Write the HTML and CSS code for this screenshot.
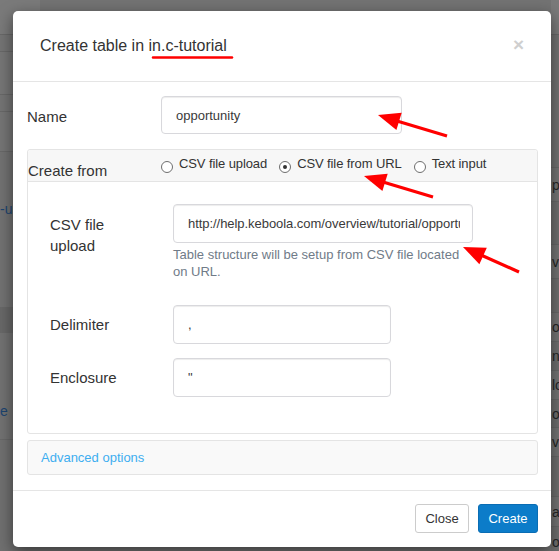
FILE: index.html
```html
<!DOCTYPE html>
<html>
<head>
<meta charset="utf-8">
<title>Create table</title>
<link rel="stylesheet" href="styles.css">
</head>
<body>
<div class="page">
  <div class="bg-left">
    <div class="bl bl-top"></div>
    <div class="bl bl-h17"></div>
    <div class="bl bl-h43"></div>
    <div class="bl bl-h17"></div>
    <div class="bl bl-h40"></div>
    <div class="bl bl-d"><span class="bg-link">-users</span></div>
    <div class="bl bl-band"></div>
    <div class="bl bl-e"><span class="bg-link">e</span></div>
    <div class="bl bl-rest"></div>
  </div>
  <div class="bg-mid"></div>
  <div class="bg-right">
    <div class="br br-top"></div>
    <div class="br br-h133"></div>
    <div class="br br-h34 alt">pt</div>
    <div class="br br-h43"></div>
    <div class="br br-h34 alt">va</div>
    <div class="br br-h34"></div>
    <div class="br br-h29 alt">oš</div>
    <div class="br br-h29">n</div>
    <div class="br br-h29 alt">lo</div>
    <div class="br br-h28">ov</div>
    <div class="br br-h29 alt">vá</div>
    <div class="br br-h40"></div>
    <div class="br br-h30 alt">ač</div>
    <div class="br br-h30">ou</div>
  </div>
</div>

<div class="modal">
  <div class="modal-header">
    <h4 class="title">Create table in <span class="bucket">in.c-tutorial</span></h4>
    <span class="close">×</span>
  </div>
  <div class="modal-body">
    <div class="name-row">
      <label class="name-label">Name</label>
      <input class="field name-input" type="text" value="opportunity">
    </div>

    <div class="panel">
      <div class="panel-heading">
        <span class="from-label">Create from</span>
        <div class="radios">
          <label class="radio"><span class="circle"></span><span>CSV file upload</span></label>
          <label class="radio"><span class="circle checked"></span><span>CSV file from URL</span></label>
          <label class="radio"><span class="circle"></span><span>Text input</span></label>
        </div>
      </div>
      <div class="panel-body">
        <div class="group group-url">
          <label class="group-label label-top">CSV file upload</label>
          <div class="group-field">
            <input class="field url-input" type="text" value="http://help.keboola.com/overview/tutorial/opportunity.csv">
            <p class="help">Table structure will be setup from CSV file located on URL.</p>
          </div>
        </div>
        <div class="group group-mid">
          <label class="group-label">Delimiter</label>
          <input class="field small-input" type="text" value=",">
        </div>
        <div class="group group-mid group-last">
          <label class="group-label">Enclosure</label>
          <input class="field small-input" type="text" value="&quot;">
        </div>
      </div>
    </div>

    <div class="advanced">
      <span class="adv-link">Advanced options</span>
    </div>
  </div>
  <div class="modal-footer">
    <button class="btn btn-default">Close</button>
    <button class="btn btn-primary">Create</button>
  </div>
</div>

<svg class="annot" width="559" height="551" viewBox="0 0 559 551">
  <line x1="153" y1="57.5" x2="232" y2="57.5" stroke="#ff0000" stroke-width="2.5" stroke-linecap="round"/>
  <line x1="447" y1="136" x2="397" y2="121" stroke="#ff0000" stroke-width="3.2"/>
  <polygon points="378,115 401.7,112.8 396.4,130" fill="#ff0000"/>
  <line x1="433" y1="197" x2="383" y2="182" stroke="#ff0000" stroke-width="3.2"/>
  <polygon points="364,176 387.7,173.8 382.4,191" fill="#ff0000"/>
  <line x1="519" y1="272" x2="481" y2="255" stroke="#ff0000" stroke-width="3.2"/>
  <polygon points="463,247 486.8,247.8 479.4,264.2" fill="#ff0000"/>
</svg>
</body>
</html>
```

FILE: styles.css
```css
html, body {
  margin: 0;
  padding: 0;
}

body {
  width: 559px;
  height: 551px;
  overflow: hidden;
  position: relative;
  font-family: "Liberation Sans", Arial, sans-serif;
}

/* ---------- dimmed page behind the dialog ---------- */
.page {
  display: grid;
  grid-template-columns: 40px 1fr 8px;
  height: 551px;
  background: #737373;
  font-size: 14px;
  overflow: hidden;
}

.bg-left, .bg-right {
  display: flex;
  flex-direction: column;
  overflow: hidden;
  white-space: nowrap;
}

.bl {
  box-sizing: border-box;
  border-bottom: 1px solid #686868;
  flex-shrink: 0;
}
.bl-top { height: 35px; background: #7a7a7a; }
.bl-h17 { height: 17px; background: #747474; }
.bl-h43 { height: 43px; background: #767676; }
.bl-h40 { height: 40px; background: #757575; }
.bl-d { height: 156px; padding-top: 48px; line-height: 18px; background: #727272; }
.bl-band { height: 25px; background: #686868; }
.bl-e { height: 107px; padding-top: 69px; line-height: 18px; background: #727272; }
.bl-rest { flex: 1; border-bottom: none; background: #707070; }

.bg-link {
  color: #1c4470;
}

.br {
  box-sizing: border-box;
  border-bottom: 1px solid #686868;
  flex-shrink: 0;
  color: #262626;
  padding-left: 1px;
  background: #6f6f6f;
}
.br.alt { background: #747474; }
.br-top { height: 35px; background: #7a7a7a; }
.br-h133 { height: 133px; background: #727272; }
.br-h34 { height: 34px; line-height: 34px; }
.br-h43 { height: 43px; }
.br-h29 { height: 29px; line-height: 29px; }
.br-h28 { height: 28px; line-height: 28px; }
.br-h40 { height: 40px; }
.br-h30 { height: 30px; line-height: 30px; }

/* ---------- dialog ---------- */
.modal {
  position: absolute;
  left: 13px;
  top: 11px;
  width: 538px;
  background: #fff;
  border-radius: 5px;
  box-shadow: 0 5px 15px rgba(0, 0, 0, 0.5);
  color: #333;
}

.modal-header {
  display: flex;
  justify-content: space-between;
  align-items: flex-start;
  padding: 24px 27px 24px 27px;
  border-bottom: 1px solid #e5e5e5;
}

.title {
  margin: 0;
  font-size: 16px;
  line-height: 22px;
  font-weight: normal;
  color: #333;
}

.close {
  font-size: 19px;
  line-height: 20px;
  font-weight: bold;
  color: #cfcfcf;
  margin-top: 0;
}

.modal-body {
  padding: 14px 13px 15px 14px;
}

.name-row {
  display: flex;
  align-items: center;
}

.name-label {
  width: 134px;
  font-size: 15px;
  line-height: 21px;
  margin-top: 2px;
}

.field {
  box-sizing: border-box;
  font-family: "Liberation Sans", Arial, sans-serif;
  font-size: 13px;
  color: #3a3a3a;
  background: #fff;
  border: 1px solid #d8d8dc;
  border-radius: 4px;
  box-shadow: inset 0 1px 1px rgba(0, 0, 0, 0.075);
  padding: 0 14px;
  margin: 0;
  outline: none;
}

.name-input {
  width: 241px;
  height: 38px;
}

/* panel */
.panel {
  margin-top: 15px;
  border: 1px solid #e4e4e4;
  border-radius: 3px;
}

.panel-heading {
  display: flex;
  align-items: flex-start;
  height: 31px;
  background: #f7f7f7;
  border-bottom: 1px solid #e4e4e4;
  border-radius: 3px 3px 0 0;
}

.from-label {
  width: 133px;
  font-size: 15px;
  line-height: 21px;
  margin-top: 10px;
}

.radios {
  display: flex;
  margin-top: 5px;
  font-size: 13px;
  line-height: 18px;
  letter-spacing: -0.1px;
}

.radio {
  display: flex;
  align-items: center;
  gap: 6px;
  margin-right: 12px;
}

.circle {
  box-sizing: border-box;
  width: 12px;
  height: 12px;
  margin-top: 5px;
  border: 1px solid #6e6e6e;
  border-radius: 50%;
  background: #fff;
  display: flex;
  align-items: center;
  justify-content: center;
}

.circle.checked::after {
  content: "";
  width: 4px;
  height: 4px;
  border-radius: 50%;
  background: #333;
}

.panel-body {
  padding: 22px 22px 36px 22px;
}

.group {
  display: flex;
  align-items: center;
}

.group-url {
  align-items: flex-start;
}

.group-label {
  width: 95px;
  margin-right: 28px;
  font-size: 15px;
  line-height: 21px;
}

.label-top {
  margin-top: 10px;
}

.group-field {
  width: 300px;
}

.url-input {
  width: 300px;
  height: 39px;
  padding-right: 12px;
  letter-spacing: -0.05px;
}

.help {
  margin: 3px 0 0 0;
  font-size: 13px;
  line-height: 17px;
  color: #707b88;
}

.group-mid {
  margin-top: 25px;
}

.group-last {
  margin-top: 14px;
}

.small-input {
  width: 218px;
  height: 39px;
}

.advanced {
  margin-top: 6px;
  height: 33px;
  border: 1px solid #e4e4e4;
  border-radius: 3px;
  background: #f9f9f9;
  padding-left: 13px;
  font-size: 13px;
  line-height: 33px;
}

.adv-link {
  color: #3eaef0;
}

.modal-footer {
  display: flex;
  justify-content: flex-end;
  gap: 9px;
  padding: 13px 13px 14px 13px;
  border-top: 1px solid #e5e5e5;
}

.btn {
  box-sizing: border-box;
  height: 29px;
  font-family: "Liberation Sans", Arial, sans-serif;
  font-size: 13px;
  border-radius: 3px;
  cursor: pointer;
}

.btn-default {
  width: 54px;
  padding: 0;
  background: #fff;
  color: #333;
  border: 1px solid #cccccc;
}

.btn-primary {
  width: 60px;
  padding: 0;
  background: #0c7cc9;
  color: #fff;
  border: 1px solid #0a6db4;
}

/* annotations drawn on top of the screenshot */
.annot {
  position: absolute;
  left: 0;
  top: 0;
  pointer-events: none;
}
```
